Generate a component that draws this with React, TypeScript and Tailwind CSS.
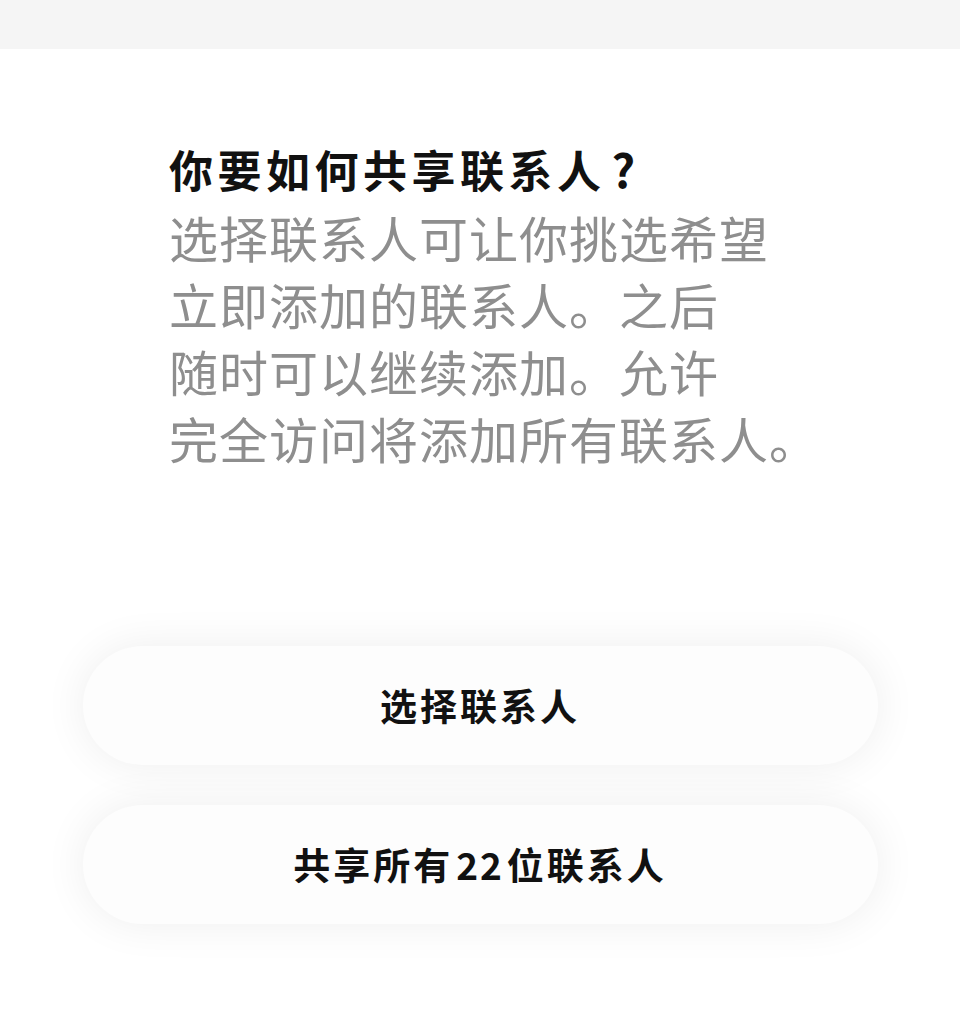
import React from 'react';

const FONT = "font-['Noto_Sans_CJK_SC','Noto_Sans',sans-serif]";

const bodyLines = [
  '选择联系人可让你挑选希望',
  '立即添加的联系人。之后',
  '随时可以继续添加。允许',
  '完全访问将添加所有联系人。',
];

function ActionButton({ children }: { children: React.ReactNode }) {
  return (
    <button
      type="button"
      className="flex h-[119px] w-[795px] items-center justify-center rounded-full bg-[#fdfdfd] text-[37px] font-bold tracking-[3px] text-[#111] shadow-[0_0_44px_rgba(0,0,0,0.07)]"
    >
      {children}
    </button>
  );
}

export default function App() {
  return (
    <div className={`min-h-[1030px] bg-white ${FONT}`}>
      {/* status strip */}
      <div className="h-[49px] bg-[#f5f5f5]" />

      <div className="pl-[169px] pt-[89px]">
        <h1 className="text-[44px] font-bold leading-[60px] tracking-[4.5px] text-[#111]">
          你要如何共享联系人<span className="ml-[6px] text-[46px]">?</span>
        </h1>
        <div className="mt-[4px] text-[49px] leading-[67px] tracking-[1px] text-[#8e8e8e]">
          {bodyLines.map((line) => (
            <div key={line} className="whitespace-nowrap">
              {line}
            </div>
          ))}
        </div>
      </div>

      <div className="mt-[175px] flex flex-col items-center gap-[40px] pb-[100px]">
        <ActionButton>选择联系人</ActionButton>
        <ActionButton>
          共享所有<span className="mx-[3px] tracking-[2px]">22</span>位联系人
        </ActionButton>
      </div>
    </div>
  );
}
